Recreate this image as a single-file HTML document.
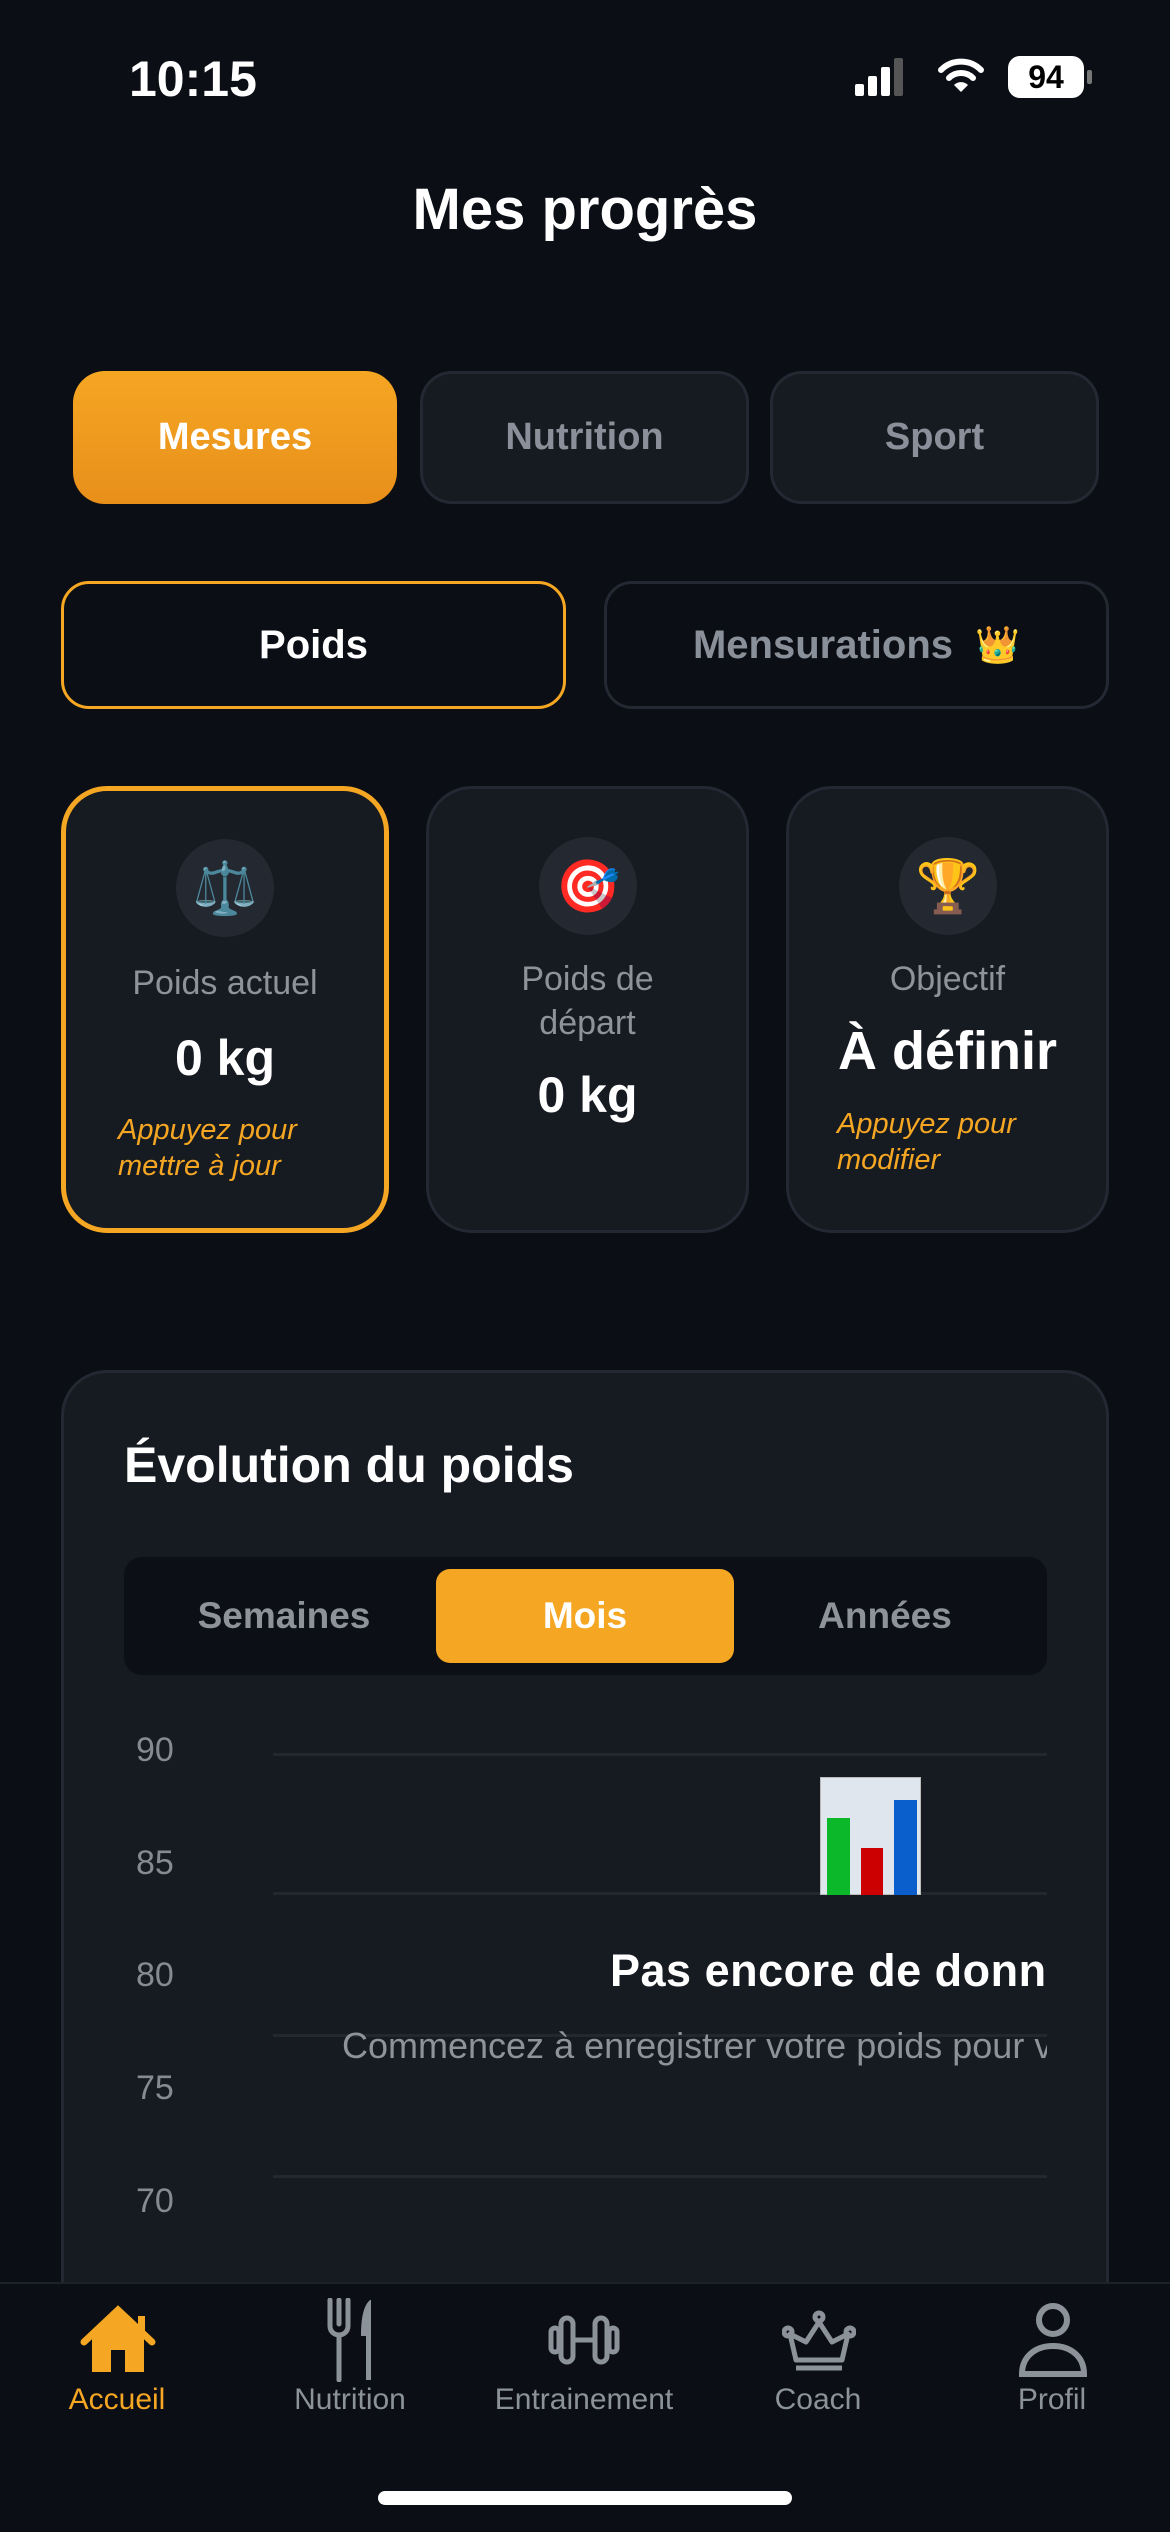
<!DOCTYPE html><html><head><meta charset="utf-8"><style>
*{margin:0;padding:0;box-sizing:border-box}
body{width:1170px;height:2532px;background:#0b0e15;font-family:"Liberation Sans",sans-serif;color:#fff;position:relative;overflow:hidden}
.a{position:absolute}
.c{display:flex;align-items:center;justify-content:center}
.tab{background:#161a21;border:3px solid #232832;border-radius:32px;color:#8a9099;font-size:38px;font-weight:bold}
.card{background:#161a21;border:3px solid #232832;border-radius:46px;text-align:center}
.ic{width:98px;height:98px;border-radius:50%;background:#232831;font-size:52px}
.lab{color:#8e939b;font-size:34px;line-height:44px}
.val{font-size:50px;font-weight:bold}
.hint{color:#f5a623;font-style:italic;font-size:29px;line-height:36px;text-align:left}
.yl{color:#858a93;font-size:34px;left:136px}
.gl{left:273px;width:774px;height:3px;background:#232830}
.nv{width:234px;text-align:center;color:#8c929a;font-size:30px;top:2383px}
</style></head><body>
<div class="a" style="left:129px;top:50px;font-size:50px;font-weight:bold">10:15</div>
<div class="a" style="left:855px;top:58px;width:80px;height:40px">
<div class="a" style="left:0;top:26px;width:9px;height:12px;background:#fff;border-radius:2px"></div>
<div class="a" style="left:13px;top:18px;width:9px;height:20px;background:#fff;border-radius:2px"></div>
<div class="a" style="left:26px;top:9px;width:9px;height:29px;background:#fff;border-radius:2px"></div>
<div class="a" style="left:39px;top:0;width:9px;height:38px;background:#555;border-radius:2px"></div></div>
<svg class="a" style="left:938px;top:58px" width="46" height="36" viewBox="0 0 46 36"><path d="M3 12a28 28 0 0 1 40 0" stroke="#fff" stroke-width="6" fill="none" stroke-linecap="round"/><path d="M11 20a17 17 0 0 1 24 0" stroke="#fff" stroke-width="6" fill="none" stroke-linecap="round"/><path d="M23 34l-7-7a10 10 0 0 1 14 0z" fill="#fff"/></svg>
<div class="a c" style="left:1008px;top:56px;width:76px;height:42px;background:#fff;border-radius:12px;color:#000;font-size:32px;font-weight:bold">94</div>
<div class="a" style="left:1087px;top:70px;width:5px;height:14px;background:#777;border-radius:2px"></div>
<div class="a" style="left:0;width:1170px;top:176px;text-align:center;font-size:58px;font-weight:bold">Mes progrès</div>
<div class="a c tab" style="left:73px;top:371px;width:324px;height:133px;background:linear-gradient(#f5a623,#e88f1a);border:none;color:#fff">Mesures</div>
<div class="a c tab" style="left:420px;top:371px;width:329px;height:133px">Nutrition</div>
<div class="a c tab" style="left:770px;top:371px;width:329px;height:133px">Sport</div>
<div class="a c" style="left:61px;top:581px;width:505px;height:128px;border:3px solid #f5a623;border-radius:28px;font-size:40px;font-weight:bold;background:#0b0e15">Poids</div>
<div class="a c" style="left:604px;top:581px;width:505px;height:128px;border:3px solid #232832;border-radius:28px;font-size:40px;font-weight:bold;color:#8a9099">Mensurations&nbsp;&nbsp;<span style="font-size:36px">👑</span></div>
<div class="a card" style="left:61px;top:786px;width:328px;height:447px;border:5px solid #f5a623">
<div class="a c ic" style="left:110px;top:48px">⚖️</div>
<div class="a lab" style="left:0;width:318px;top:170px">Poids actuel</div>
<div class="a val" style="left:0;width:318px;top:238px">0 kg</div>
<div class="a hint" style="left:52px;top:321px">Appuyez pour<br>mettre à jour</div></div>
<div class="a card" style="left:426px;top:786px;width:323px;height:447px">
<div class="a c ic" style="left:110px;top:48px">🎯</div>
<div class="a lab" style="left:0;width:317px;top:168px">Poids de<br>départ</div>
<div class="a val" style="left:0;width:317px;top:277px">0 kg</div></div>
<div class="a card" style="left:786px;top:786px;width:323px;height:447px">
<div class="a c ic" style="left:110px;top:48px">🏆</div>
<div class="a lab" style="left:0;width:317px;top:168px">Objectif</div>
<div class="a val" style="left:0;width:317px;top:231px;font-size:54px">À définir</div>
<div class="a hint" style="left:48px;top:317px">Appuyez pour<br>modifier</div></div>
<div class="a" style="left:61px;top:1370px;width:1048px;height:1000px;background:#161a21;border:3px solid #232832;border-radius:46px"></div>
<div class="a" style="left:124px;top:1436px;font-size:50px;font-weight:bold">Évolution du poids</div>
<div class="a" style="left:124px;top:1557px;width:923px;height:118px;background:#0c0f15;border-radius:18px"></div>
<div class="a c" style="left:136px;top:1569px;width:296px;height:94px;color:#8e939b;font-size:37px;font-weight:bold">Semaines</div>
<div class="a c" style="left:436px;top:1569px;width:298px;height:94px;background:#f5a623;border-radius:14px;font-size:37px;font-weight:bold">Mois</div>
<div class="a c" style="left:736px;top:1569px;width:298px;height:94px;color:#8e939b;font-size:37px;font-weight:bold">Années</div>
<div class="a yl" style="top:1731px">90</div><div class="a yl" style="top:1844px">85</div><div class="a yl" style="top:1956px">80</div><div class="a yl" style="top:2069px">75</div><div class="a yl" style="top:2182px">70</div>
<div class="a gl" style="top:1753px"></div><div class="a gl" style="top:1892px"></div><div class="a gl" style="top:2034px"></div><div class="a gl" style="top:2175px"></div>
<div class="a" style="left:820px;top:1777px;width:101px;height:118px;background:#dfe6ee;border:1px solid #bbb">
<div class="a" style="left:6px;top:40px;width:23px;height:77px;background:#0ab82a"></div>
<div class="a" style="left:40px;top:70px;width:22px;height:47px;background:#c00"></div>
<div class="a" style="left:73px;top:22px;width:23px;height:95px;background:#0a5fcc"></div></div>
<div class="a" style="left:300px;top:1945px;width:747px;height:160px;overflow:hidden">
<div class="a" style="left:310px;top:0;font-size:45px;font-weight:bold;white-space:nowrap;letter-spacing:0.5px">Pas encore de données</div>
<div class="a" style="left:42px;top:80px;font-size:36px;color:#8e939b;white-space:nowrap">Commencez à enregistrer votre poids pour voir</div></div>
<div class="a" style="left:0;top:2282px;width:1170px;height:250px;background:#0b0e15;border-top:2px solid #1c2029"></div>
<svg class="a" style="left:80px;top:2302px" width="76" height="76" viewBox="0 0 76 76"><path d="M12 36v34h52V36L38 12z" fill="#f5a623"/><path d="M4 40L38 8l34 32" stroke="#f5a623" stroke-width="7" fill="none" stroke-linecap="round"/><rect x="58" y="14" width="7" height="18" fill="#f5a623"/><rect x="31" y="48" width="14" height="22" fill="#0b0e15"/></svg>
<svg class="a" style="left:326px;top:2298px" width="50" height="84" viewBox="0 0 50 84"><path d="M4 2v26c0 6 5 9 9 9v45M13 2v24M22 2v26c0 6-5 9-9 9" stroke="#8c929a" stroke-width="5" fill="none" stroke-linecap="round"/><path d="M44 2c-7 6-9 20-9 36h5v44h5V2z" fill="#8c929a"/></svg>
<svg class="a" style="left:548px;top:2314px" width="72" height="52" viewBox="0 0 72 52"><g stroke="#8c929a" stroke-width="5" fill="none"><rect x="3" y="14" width="8" height="24" rx="4"/><rect x="13" y="4" width="12" height="44" rx="6"/><rect x="47" y="4" width="12" height="44" rx="6"/><rect x="61" y="14" width="8" height="24" rx="4"/><path d="M25 26h22"/></g></svg>
<svg class="a" style="left:782px;top:2310px" width="74" height="64" viewBox="0 0 74 64"><g stroke="#8c929a" stroke-width="5" fill="none" stroke-linejoin="round"><circle cx="37" cy="7" r="4"/><circle cx="6" cy="22" r="4"/><circle cx="68" cy="22" r="4"/><path d="M37 12l-13 20-16-8 6 26h46l6-26-16 8zM14 58h46"/></g></svg>
<svg class="a" style="left:1018px;top:2302px" width="70" height="76" viewBox="0 0 70 76"><g stroke="#8c929a" stroke-width="6" fill="none"><circle cx="35" cy="18" r="14"/><path d="M4 72c0-18 14-28 31-28s31 10 31 28z"/></g></svg>
<div class="a nv" style="left:0;color:#f5a623">Accueil</div>
<div class="a nv" style="left:233px">Nutrition</div>
<div class="a nv" style="left:467px">Entrainement</div>
<div class="a nv" style="left:701px">Coach</div>
<div class="a nv" style="left:935px">Profil</div>
<div class="a" style="left:378px;top:2491px;width:414px;height:14px;background:#fff;border-radius:7px"></div>
</body></html>
